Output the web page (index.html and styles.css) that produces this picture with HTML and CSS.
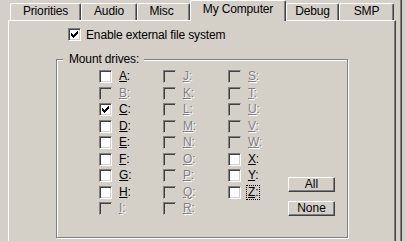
FILE: index.html
```html
<!DOCTYPE html>
<html lang="en">
  <head>
    <meta charset="UTF-8" />
    <title>My Computer</title>
    <link rel="stylesheet" href="styles.css">
  </head>
  <body>
    <div id="dialog">
      <div id="tabs">
        <div class="tab tab-priorities">Priorities</div>
        <div class="tab tab-audio">Audio</div>
        <div class="tab tab-misc">Misc</div>
        <div class="tab tab-mycomputer selected">My Computer</div>
        <div class="tab tab-debug">Debug</div>
        <div class="tab tab-smp">SMP</div>
      </div>
      <div id="panel">
        <label class="check-row">
          <span class="box checked"><svg width="7" height="7" viewBox="0 0 7 7" shape-rendering="crispEdges"><rect x="0" y="2" width="1" height="3"/><rect x="1" y="3" width="1" height="3"/><rect x="2" y="4" width="1" height="3"/><rect x="3" y="3" width="1" height="3"/><rect x="4" y="2" width="1" height="3"/><rect x="5" y="1" width="1" height="3"/><rect x="6" y="0" width="1" height="3"/></svg></span>
          <span class="check-text">Enable external file system</span>
        </label>
        <div id="mount">
          <div class="group-title">Mount drives:</div>
          <div class="group-body">
            <div id="drives"></div>
            <div id="side-buttons">
              <button class="win-btn">All</button>
              <button class="win-btn">None</button>
            </div>
          </div>
        </div>
      </div>
    </div>
    <script>
      const drivesBox = document.querySelector("#drives");
      const enabled = "ACDEFGHXYZ";
      const checkSvg = document.querySelector(".box.checked svg").outerHTML;

      for (let i = 0; i < 26; i++) {
        const letter = String.fromCharCode(65 + i);
        const item = document.createElement("div");
        item.className = "drive" + (enabled.includes(letter) ? "" : " disabled");
        const box = document.createElement("span");
        box.className = "box";
        if (letter === "C") {
          box.classList.add("checked");
          box.innerHTML = checkSvg;
        }
        const text = document.createElement("span");
        text.className = "drive-text" + (letter === "Z" ? " focused" : "");
        text.innerHTML = "<u>" + letter + "</u>:";
        item.appendChild(box);
        item.appendChild(text);
        drivesBox.appendChild(item);
      }
    </script>
  </body>
</html>
```

FILE: styles.css
```css
* {
  margin: 0;
  padding: 0;
  box-sizing: border-box;
}
body {
  background-color: #d4d0c8;
  font-family: "Liberation Sans", Arial, sans-serif;
  font-size: 12px;
  letter-spacing: -0.15px;
  color: #000;
  overflow: hidden;
}
#dialog {
  width: 402px;
  height: 241px;
  border-right: 1px solid #404040;
  box-shadow: inset -1px 0 0 #808080;
}
#tabs {
  display: flex;
  align-items: flex-end;
  height: 20px;
  padding-left: 10px;
}
.tab {
  height: 17px;
  border-top: 1px solid #fff;
  border-left: 1px solid #fff;
  border-right: 1px solid #404040;
  box-shadow: inset -1px 0 0 #808080;
  border-radius: 2px 2px 0 0;
  text-align: center;
  line-height: 15px;
}
.tab-priorities { width: 71px; }
.tab-audio { width: 56px; }
.tab-misc { width: 53px; padding-right: 4px; }
.tab-mycomputer { width: 96px; }
.tab-debug { width: 53px; }
.tab-smp { width: 55px; }
.tab.selected {
  height: 21px;
  margin-bottom: -1px;
  background-color: #d4d0c8;
  position: relative;
  z-index: 1;
  line-height: 16px;
}
#panel {
  margin-left: 8px;
  width: 388px;
  height: 230px;
  border-top: 1px solid #fff;
  border-left: 1px solid #fff;
  border-right: 1px solid #404040;
  box-shadow: inset -1px 0 0 #808080;
  padding: 7px 0 0 59px;
}
.check-row {
  display: flex;
  align-items: center;
  height: 13px;
  gap: 5px;
}
.box {
  width: 13px;
  height: 13px;
  flex: none;
  display: flex;
  align-items: center;
  justify-content: center;
  background-color: #fff;
  border-top: 1px solid #808080;
  border-left: 1px solid #808080;
  border-right: 1px solid #fff;
  border-bottom: 1px solid #fff;
  box-shadow: inset 1px 1px 0 #404040, inset -1px -1px 0 #d4d0c8;
}
.box svg {
  fill: #000;
  display: block;
}
#mount {
  margin: 18px 0 0 -12px;
  width: 292px;
  height: 179px;
  border: 1px solid #808080;
  box-shadow: 1px 1px 0 #fff, inset 1px 1px 0 #fff;
}
.group-title {
  width: fit-content;
  margin: -8px 0 0 6px;
  padding: 0 5px 0 6px;
  background-color: #d4d0c8;
  line-height: 14px;
}
.group-body {
  display: flex;
  padding: 4px 12px 0 42px;
}
#drives {
  display: grid;
  grid-template-columns: 64px 65px 60px;
  grid-template-rows: repeat(9, 16.5px);
  grid-auto-flow: column;
  flex: 1;
}
.drive {
  display: flex;
  align-items: center;
  gap: 6px;
  height: 13px;
}
.drive.disabled .box {
  background-color: #d4d0c8;
  border-right-color: #d4d0c8;
  border-bottom-color: #d4d0c8;
}
.drive-text {
  line-height: 13px;
  padding: 0 1px;
}
.drive.disabled .drive-text {
  color: #808080;
  text-shadow: 1px 1px 0 #fff;
}
.drive-text.focused {
  outline: 1px dotted #000;
}
#side-buttons {
  display: flex;
  flex-direction: column;
  justify-content: flex-end;
  gap: 9px;
  padding-bottom: 3px;
}
.win-btn {
  width: 47px;
  height: 15px;
  font-family: inherit;
  font-size: 12px;
  line-height: 11px;
  background-color: #d4d0c8;
  border-top: 1px solid #fff;
  border-left: 1px solid #fff;
  border-right: 1px solid #404040;
  border-bottom: 1px solid #404040;
  box-shadow: inset -1px -1px 0 #808080;
  color: #000;
}
```
